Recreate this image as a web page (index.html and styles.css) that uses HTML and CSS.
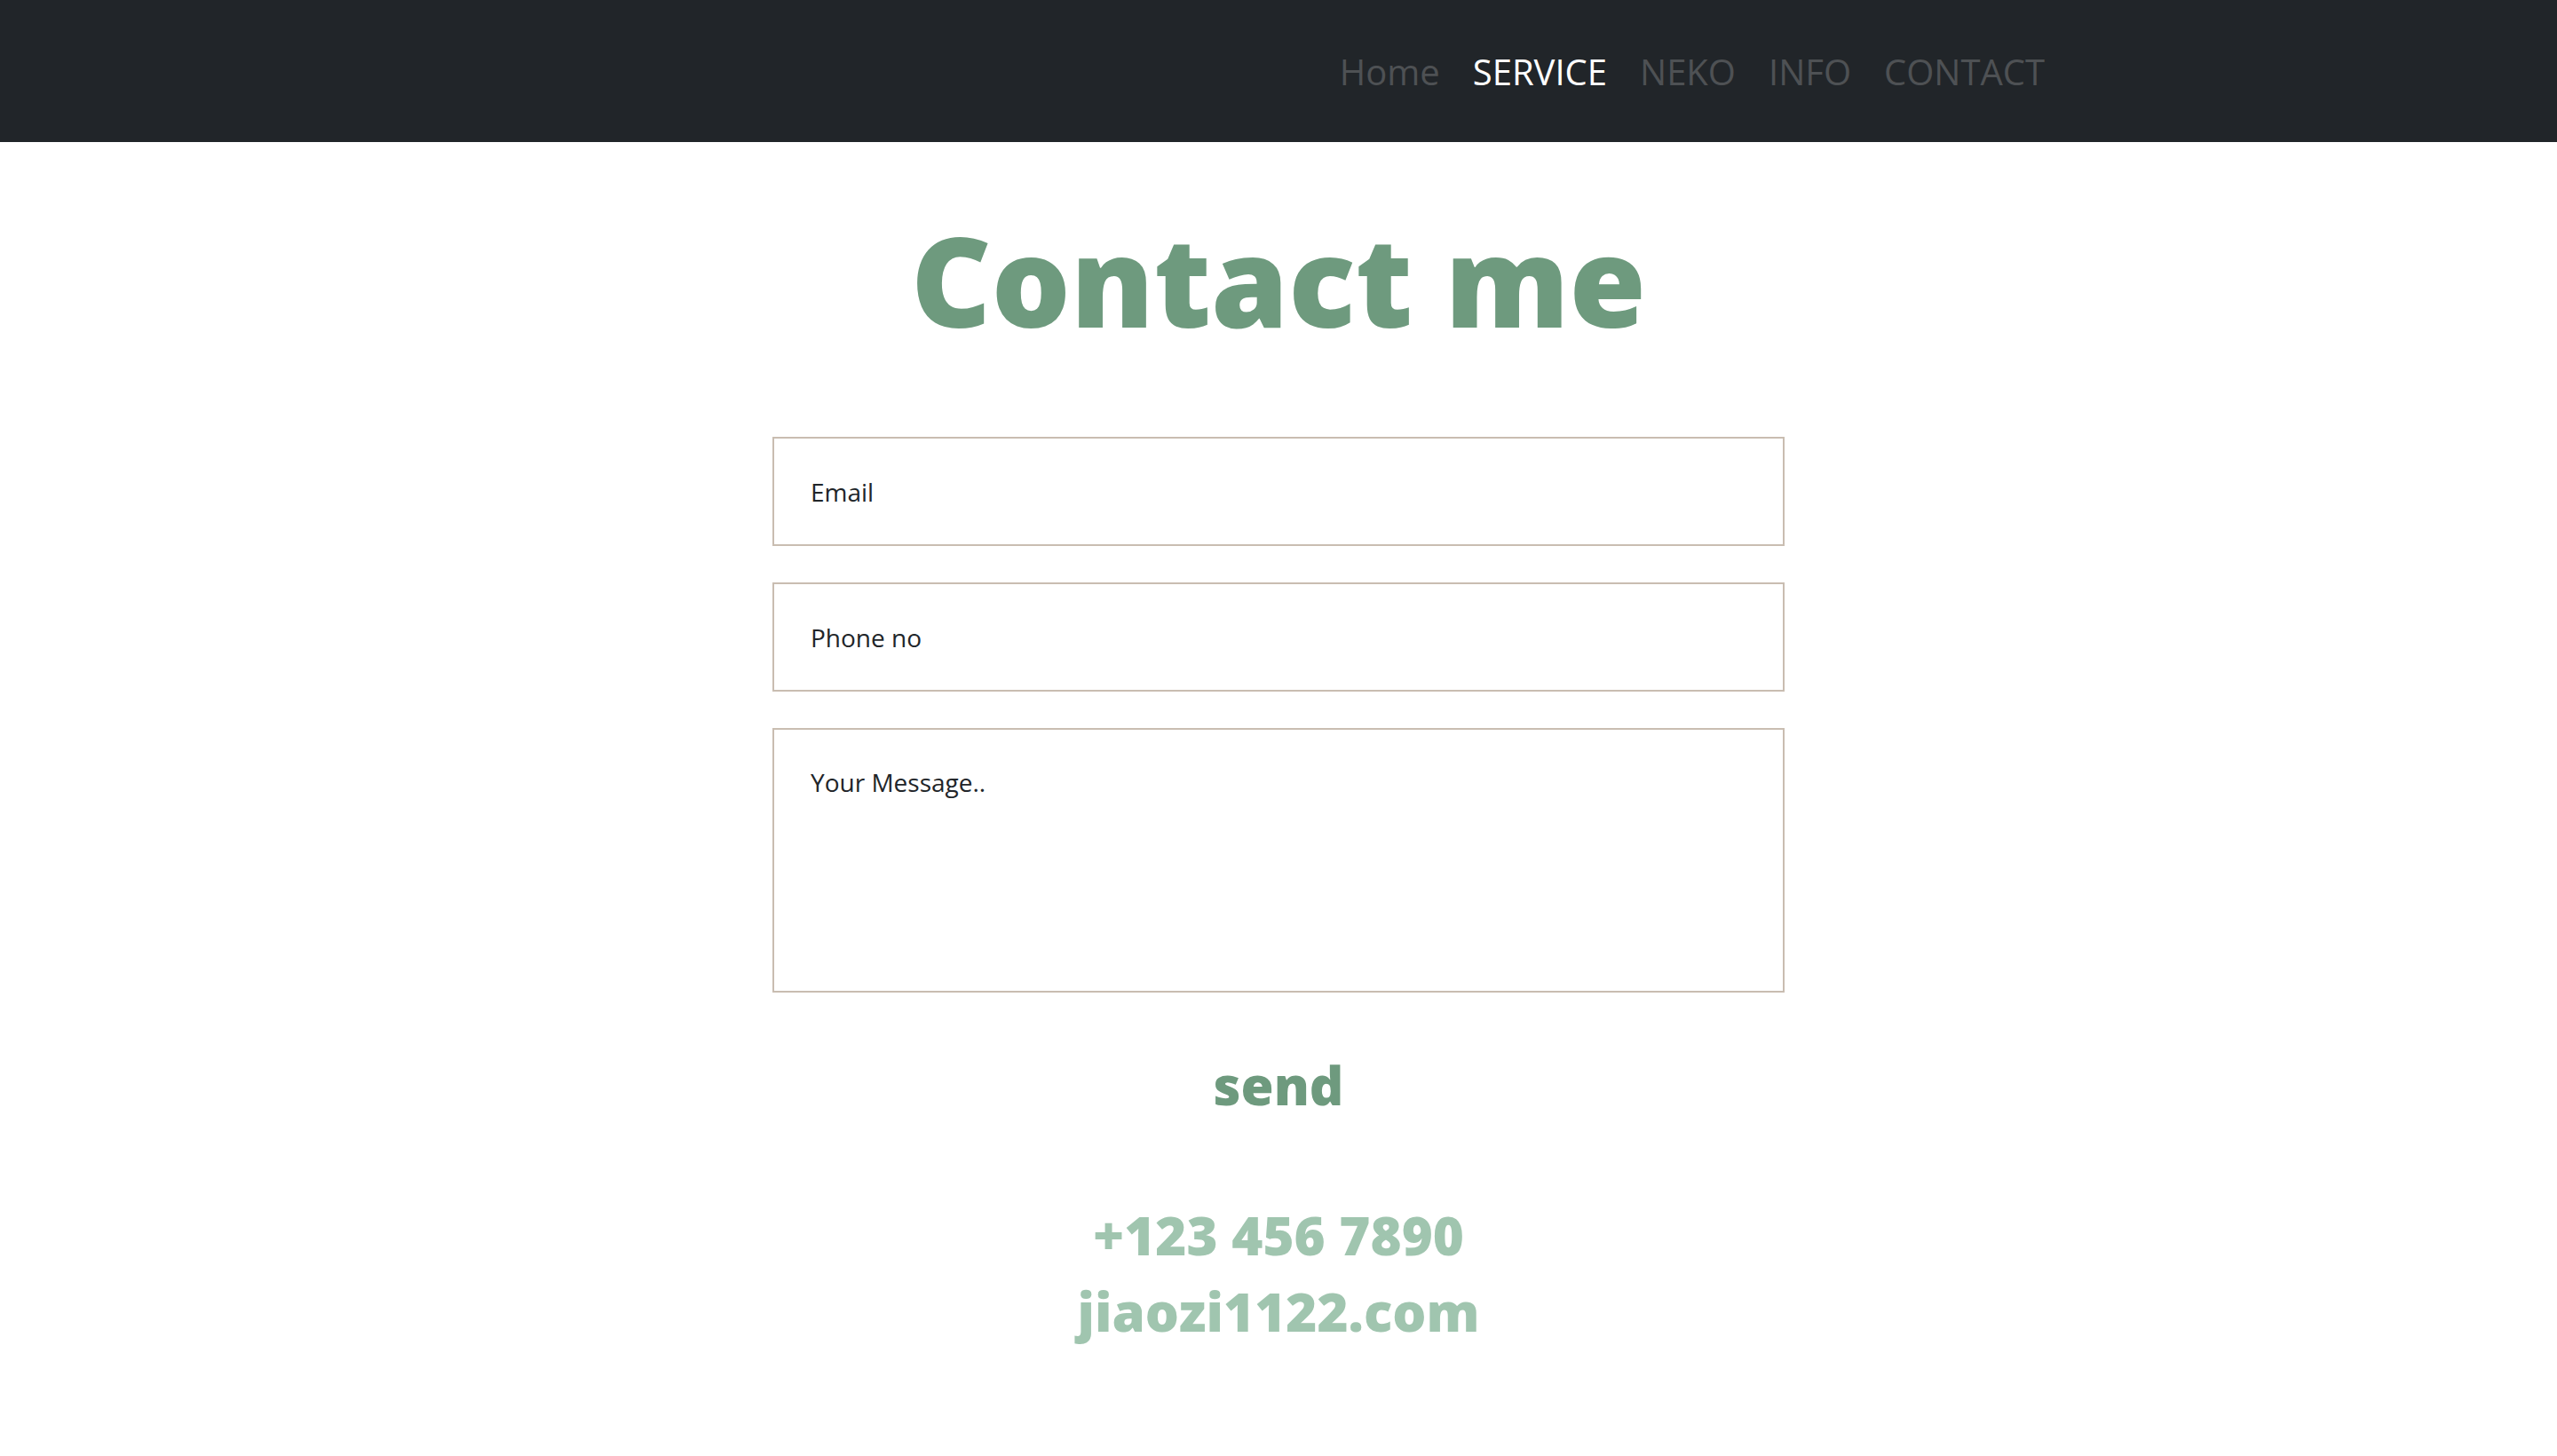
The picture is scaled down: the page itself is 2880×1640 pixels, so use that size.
FILE: index.html
```html
<!DOCTYPE html>
<html lang="en">
<head>
<meta charset="utf-8">
<title>Contact me</title>
<link rel="stylesheet" href="styles.css">
</head>
<body>
<header class="navbar">
  <nav class="nav-inner">
    <a class="nav-link" href="#">Home</a>
    <a class="nav-link active" href="#">SERVICE</a>
    <a class="nav-link" href="#">NEKO</a>
    <a class="nav-link" href="#">INFO</a>
    <a class="nav-link" href="#">CONTACT</a>
  </nav>
</header>
<main class="contact">
  <h1 class="title">Contact me</h1>
  <form class="form">
    <input class="field" type="email" placeholder="Email">
    <input class="field" type="text" placeholder="Phone no">
    <textarea class="field message" placeholder="Your Message.."></textarea>
    <button class="send" type="button">send</button>
  </form>
  <div class="info">
    <p class="info-line">+123 456 7890</p>
    <p class="info-line">jiaozi1122.com</p>
  </div>
</main>
</body>
</html>
```
FILE: styles.css
```css
* { box-sizing: border-box; }
html, body { margin: 0; padding: 0; background: #ffffff; }
body { font-family: "Open Sans", "Noto Sans", sans-serif; }

.navbar {
  height: 160px;
  background: #212529;
  display: flex;
  align-items: center;
}
.nav-inner {
  width: 100%;
  display: flex;
  justify-content: flex-end;
  gap: 37px;
  padding-right: 577px;
}
.nav-link {
  font-size: 40px;
  line-height: 1;
  color: #4e5154;
  text-decoration: none;
  margin-top: 2px;
}
.nav-link.active { color: #ffffff; }

.contact {
  display: flex;
  flex-direction: column;
  align-items: center;
}
.title {
  margin: 71px 0 0;
  font-size: 140px;
  line-height: 1.2;
  font-weight: 800;
  color: #6e9a7e;
}
.form {
  width: 1140px;
  margin-top: 93px;
  display: flex;
  flex-direction: column;
}
.field {
  display: block;
  width: 100%;
  height: 123px;
  margin: 0 0 41px;
  padding: 40px 41px;
  border: 2px solid #c9bdb1;
  border-radius: 0;
  font-family: "Open Sans", sans-serif;
  font-size: 28px;
  line-height: 38px;
  color: #212529;
  background: #ffffff;
  outline: none;
}
.field::placeholder { color: #212529; opacity: 1; }
.message {
  height: 298px;
  margin-bottom: 0;
  resize: none;
  padding-top: 40px;
}
.send {
  align-self: center;
  margin-top: 63px;
  padding: 0;
  border: 0;
  background: none;
  font-family: "Open Sans", sans-serif;
  font-size: 60px;
  font-weight: 800;
  line-height: normal;
  color: #6e9a7e;
  cursor: pointer;
}
.info {
  margin-top: 85px;
  text-align: center;
}
.info-line {
  margin: 0;
  font-size: 60px;
  font-weight: 800;
  line-height: 86px;
  color: #a0c5af;
}
```
